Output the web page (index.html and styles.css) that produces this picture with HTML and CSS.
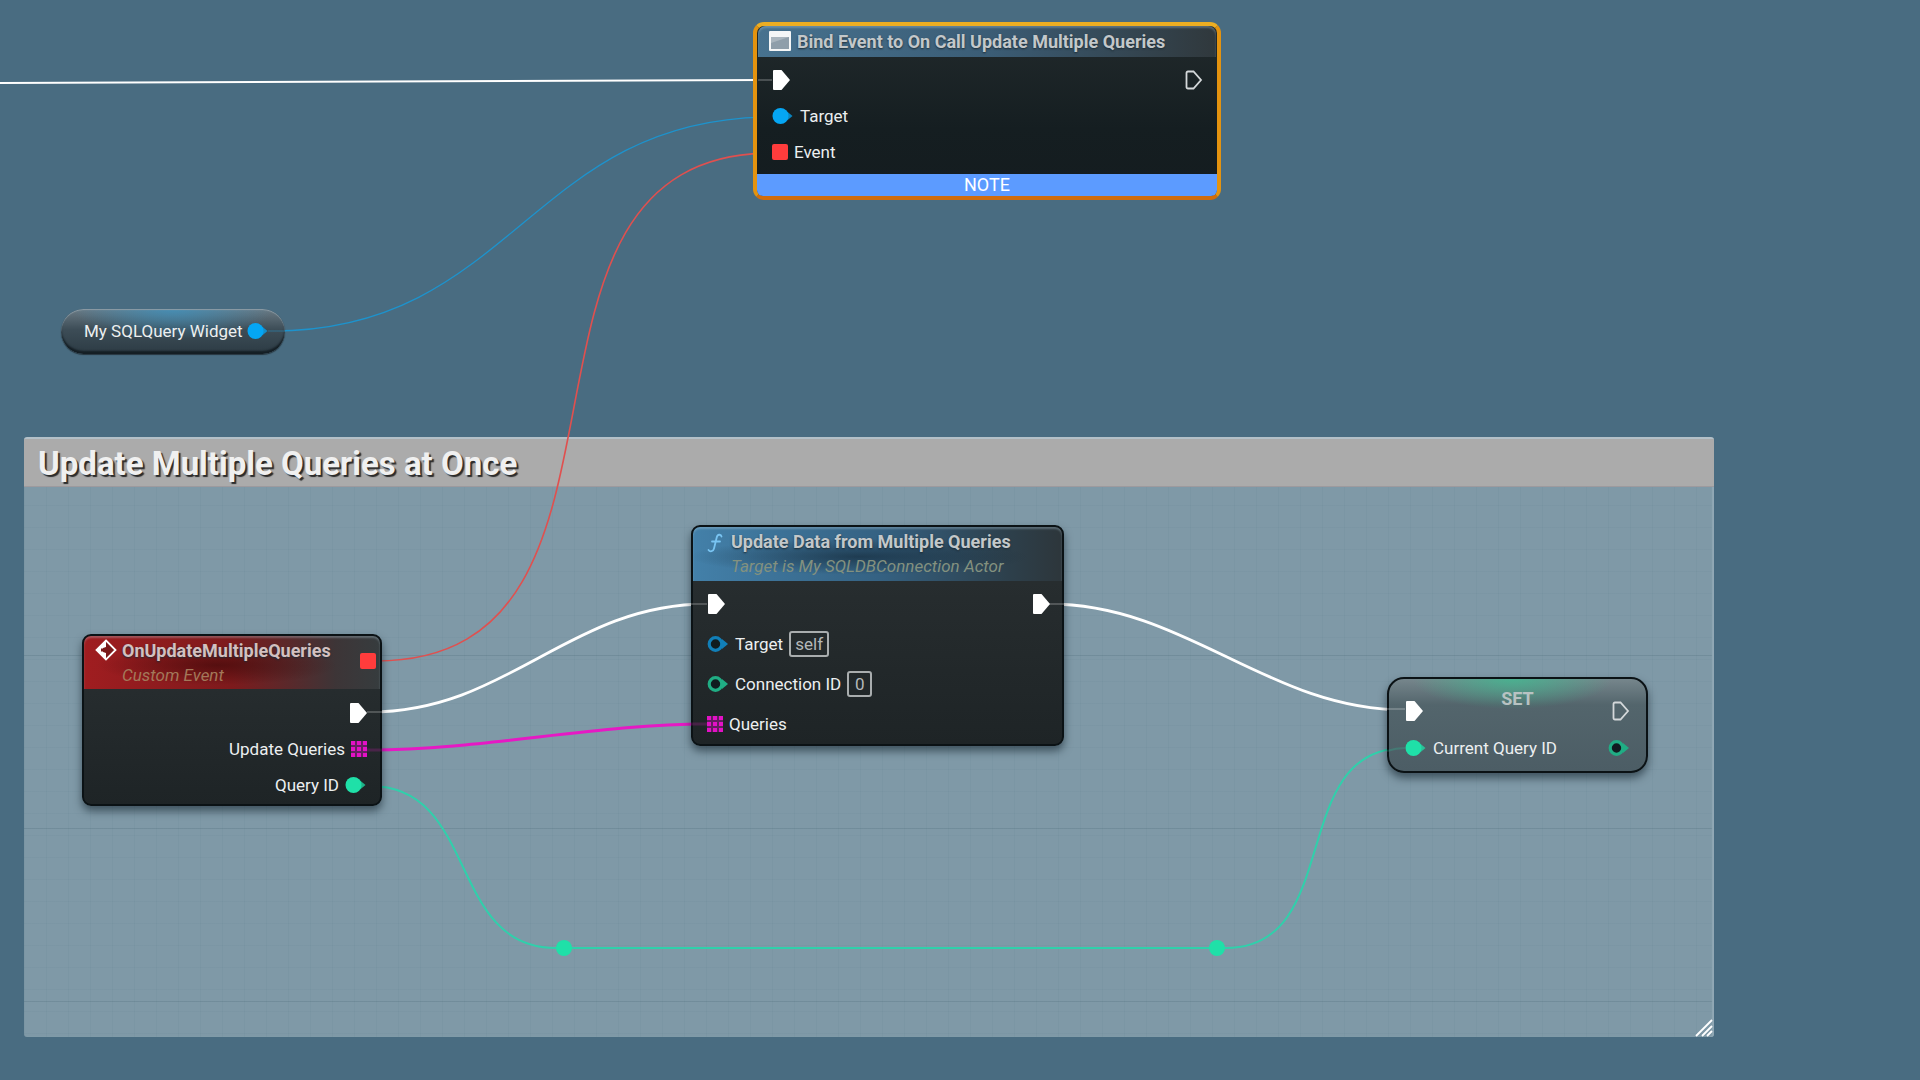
FILE: index.html
```html
<!DOCTYPE html>
<html lang="en">
<head>
<meta charset="utf-8">
<title>Blueprint Graph</title>
<link rel="stylesheet" href="styles.css">
</head>
<body>
<svg class="defs" aria-hidden="true">
  <symbol id="exec-on" viewBox="0 0 18 20"><path d="M2 0h7.500l8.500 10-8.500 10H2q-1 0-1-1V1q0-1 1-1z" fill="#fff"/></symbol>
  <symbol id="exec-off" viewBox="0 0 18 20"><path d="M3 1.500h5.500l7.500 8.500-7.500 8.500H3q-1.500 0-1.500-1.500V3q0-1.500 1.500-1.500z" fill="none" stroke="#d4d8da" stroke-width="1.800"/></symbol>
  <symbol id="pin-on" viewBox="0 0 22 18"><path d="M14.500 4l6 5-6 5z" fill="currentColor" opacity=".75"/><circle cx="8.500" cy="9" r="8" fill="currentColor"/></symbol>
  <symbol id="pin-off" viewBox="0 0 22 18"><path d="M15 4l6 5-6 5z" fill="currentColor"/><circle cx="8.500" cy="9" r="6.300" fill="#101c20" stroke="currentColor" stroke-width="3.200"/></symbol>
  <symbol id="pin-array" viewBox="0 0 16 16"><path d="M0 0h4v4H0zM6 0h4v4H6zM12 0h4v4h-4zM0 6h4v4H0zM6 6h4v4H6zM12 6h4v4h-4zM0 12h4v4H0zM6 12h4v4H6zM12 12h4v4h-4z" fill="currentColor"/><path d="M0 0h16v16H0z" fill="currentColor" opacity=".35"/></symbol>
  <symbol id="pin-delegate" viewBox="0 0 16 16"><rect width="16" height="16" rx="2" fill="currentColor"/></symbol>
</svg>
<main class="graph">
  <section class="comment">
    <h1 class="comment-title">Update Multiple Queries at Once</h1>
    <svg class="grip" viewBox="0 0 18 18"><path d="M1 17L17 1M7 17L17 7M12 17l5-5" stroke="#fff" stroke-width="1.800"/></svg>
  </section>

  <svg class="wires" fill="none">
    <path d="M0 83L772 80" stroke="#fff" stroke-width="2"/>
    <path d="M272 331C514 331 530 117 772 117" stroke="#1d93cd" stroke-width="1.300"/>
    <path d="M376 661C676 661 472 153 772 153" stroke="#e0504f" stroke-width="1.600"/>
    <path d="M370 712C508 712 569 604 707 604" stroke="#fff" stroke-width="2.800"/>
    <path d="M370 750C480 750 597 724 707 724" stroke="#e619c4" stroke-width="3"/>
    <path d="M1049 604C1186 604 1268 710 1405 710" stroke="#fff" stroke-width="2.800"/>
    <path d="M370 786C479 786 447 948 556 948H1226C1345 948 1286 748 1405 748" stroke="#30d0ab" stroke-width="2"/>
    <circle cx="564" cy="948" r="8" fill="#1fe0a8"/>
    <circle cx="1217" cy="948" r="8" fill="#1fe0a8"/>
  </svg>

  <article class="node bind">
    <header class="node-head">
      <svg class="window-icon" viewBox="0 0 22 20"><rect width="22" height="20" rx="1" fill="#f4f6f7"/><path d="M2 6h18v12H2z" fill="#8e9eaa"/><path d="M2 6h18L2 12z" fill="#a9b5be"/></svg>
      <h2 class="node-title">Bind Event to On Call Update Multiple Queries</h2>
    </header>
    <div class="pins">
      <div class="row"><svg class="exec"><use href="#exec-on"/></svg><svg class="exec end"><use href="#exec-off"/></svg></div>
      <div class="row"><svg class="pin blue"><use href="#pin-on"/></svg><span>Target</span></div>
      <div class="row"><svg class="sq red"><use href="#pin-delegate"/></svg><span>Event</span></div>
    </div>
    <footer class="note">NOTE</footer>
  </article>

  <article class="pill">
    <span>My SQLQuery Widget</span><svg class="pin blue"><use href="#pin-on"/></svg>
  </article>

  <article class="node event">
    <header class="node-head">
      <svg class="event-icon" viewBox="0 0 22 22"><path d="M11 1.500L20.500 11 11 20.500 1.500 11z" fill="#7a1a1b" stroke="#fff" stroke-width="1.800"/><path d="M11 1.500V8L8 9v4l3 1v6.500L1.500 11z" fill="#fff"/><path d="M11 6.500L15.500 11 11 15.500v-3H6v-3h5z" fill="#7a1a1b"/></svg>
      <div class="titles"><h2 class="node-title">OnUpdateMultipleQueries</h2><p class="subtitle">Custom Event</p></div>
      <svg class="sq red end"><use href="#pin-delegate"/></svg>
    </header>
    <div class="pins">
      <div class="row"><svg class="exec end"><use href="#exec-on"/></svg></div>
      <div class="row out"><span>Update Queries</span><svg class="sq pink"><use href="#pin-array"/></svg></div>
      <div class="row out"><span>Query ID</span><svg class="pin green"><use href="#pin-on"/></svg></div>
    </div>
  </article>

  <article class="node func">
    <header class="node-head">
      <svg class="f-icon" viewBox="0 0 16 20"><path d="M14.500 3.500C14 1 10.500 1 9.700 4.500L7 15.500C6.300 18.600 3 19.200 1.500 17M5 8.500h8" fill="none" stroke="#79c4f2" stroke-width="1.800" stroke-linecap="round"/></svg>
      <div class="titles"><h2 class="node-title">Update Data from Multiple Queries</h2><p class="subtitle">Target is My SQLDBConnection Actor</p></div>
    </header>
    <div class="pins">
      <div class="row"><svg class="exec"><use href="#exec-on"/></svg><svg class="exec end"><use href="#exec-on"/></svg></div>
      <div class="row"><svg class="pin blue-dim"><use href="#pin-off"/></svg><label for="target">Target</label><input class="field wide" id="target" value="self"></div>
      <div class="row"><svg class="pin green-dim"><use href="#pin-off"/></svg><label for="conn">Connection ID</label><input class="field" id="conn" value="0"></div>
      <div class="row"><svg class="sq pink"><use href="#pin-array"/></svg><span>Queries</span></div>
    </div>
  </article>

  <article class="node set">
    <div class="row"><svg class="exec"><use href="#exec-on"/></svg><h2 class="set-title">SET</h2><svg class="exec"><use href="#exec-off"/></svg></div>
    <div class="row"><svg class="pin green"><use href="#pin-on"/></svg><span>Current Query ID</span><svg class="pin green-dim end"><use href="#pin-off"/></svg></div>
  </article>

  <svg class="wires stubs" fill="none">
    <path d="M758 80H772M691 604H707M1049 604H1064M367 712H382M1387 709H1405" stroke="#fff" stroke-width="2"/>
    <path d="M268 331H286" stroke="#1fa8e8" stroke-width="2"/>
    <path d="M367 750H382M691 724H707" stroke="#e619c4" stroke-width="3"/>
    <path d="M1387 751Q1396 748 1405 748" stroke="#1fe0a8" stroke-width="2"/>
  </svg>
</main>
</body>
</html>
```
FILE: styles.css
```css
* { box-sizing: border-box; }
body {
  margin: 0;
  background: #496c81;
  color: #eceff0;
  font: 17px/20px Roboto, "Liberation Sans", sans-serif;
}
h1, h2, p { margin: 0; }
svg { display: block; flex: none; }
.defs { position: absolute; width: 0; height: 0; }
.graph { position: relative; min-height: 100vh; overflow: hidden; }

.comment {
  position: absolute; left: 24px; top: 437px; width: 1690px; height: 600px;
  border-radius: 3px;
  border-top: 2px solid #b3c0c8;
  background-color: #7f99a7;
  background-image:
    linear-gradient(rgba(80, 110, 125, .3) 1px, transparent 1px),
    linear-gradient(rgba(80, 115, 130, .08) 1px, transparent 1px),
    linear-gradient(90deg, rgba(80, 115, 130, .08) 1px, transparent 1px);
  background-size: 100% 173px, 100% 22px, 22px 100%;
  background-position: 0 43px, 0 0, 0 0;
  box-shadow: inset -2px 0 1px #91a8b5;
}
.comment-title {
  height: 48px; padding: 0 14px;
  background: #ababab;
  border-bottom: 1px solid #9d9a9e;
  color: #f0f0f0;
  font-size: 33px; line-height: 50px; font-weight: 700;
  text-shadow: 2px 2px 1px #2b2b2b;
}
.grip { position: absolute; right: 1px; bottom: 0; width: 18px; height: 18px; }

.wires { position: absolute; inset: 0; width: 100%; height: 100%; pointer-events: none; }
.stubs { opacity: .2; }

.node {
  position: absolute;
  border: 2px solid #0b1215;
  border-radius: 9px;
  background: linear-gradient(#2a3032, #1e2426);
  box-shadow: 0 5px 8px rgba(20, 35, 45, .6);
}
.node-head {
  display: flex; align-items: flex-start; gap: 8px;
  border-radius: 7px 7px 0 0;
  box-shadow: inset 0 2px 2px rgba(190, 215, 230, .3);
}
.node-title { color: #c3c8ca; font-size: 18px; line-height: 24px; font-weight: 700; white-space: nowrap; text-shadow: 0 1px 2px #1c2b34; }
.subtitle { font-style: italic; line-height: 24px; white-space: nowrap; }
.pins { display: flex; flex-direction: column; }
.row { display: flex; align-items: center; gap: 6px; white-space: nowrap; }
.end { margin-left: auto; }
.out { justify-content: flex-end; }
.exec { width: 18px; height: 20px; }
.pin { width: 22px; height: 18px; }
.sq { width: 16px; height: 16px; }
.blue { color: #05a6f4; }
.blue-dim { color: #117fb8; }
.green { color: #1fe0a8; }
.green-dim { color: #20ad84; }
.red { color: #ff3c3c; }
.pink { color: #e312c5; }
.field {
  width: 25px; height: 26px; padding: 0;
  border: 2px solid #a9adae; border-radius: 3px;
  background: transparent; color: #b4b8b9;
  font: inherit; text-align: center;
}
.field.wide { width: 40px; }

.bind {
  left: 753px; top: 22px; width: 468px;
  border: 4px solid #e8a013; border-color: #edae22 #e4930f #d06c0c;
  border-radius: 11px;
  background: linear-gradient(#222a2c, #151e21 60%, #141c1f);
  box-shadow: none;
}
.bind .node-head {
  height: 31px; padding: 5px 11px 0; gap: 6px; margin: 0 1px;
  border-radius: 8px 8px 0 0;
  background: linear-gradient(90deg, #47728f, #3b5d76 50%, #30383c);
}
.window-icon { width: 22px; height: 20px; }
.bind .node-title { line-height: 21px; }
.bind .pins { padding: 5px 14px 4px 15px; }
.bind .row { height: 36px; }
.note {
  height: 22px; border-radius: 0 0 6px 6px;
  background: #5c9bff; color: #fff; line-height: 22px; font-size: 18px; text-align: center;
}

.pill {
  position: absolute; left: 61px; top: 309px; width: 224px; height: 45px;
  display: flex; align-items: center; gap: 4px; padding: 0 0 2px 23px;
  border-radius: 23px;
  background:
    radial-gradient(ellipse 100px 30px at 50% 0, rgba(55, 150, 200, .7), transparent),
    linear-gradient(#6b7b85, #3d4d57 45%, #2c3b44);
  box-shadow: inset 0 1px 1px #8d9ca5, inset 0 -3px 2px #141e24, 0 1px 1px #26353e;
}

.event { left: 82px; top: 634px; width: 300px; }
.event .node-head {
  height: 53px; padding: 3px 4px 0 11px; gap: 5px;
  background:
    radial-gradient(ellipse 120px 20px at 45% 55%, rgba(50, 5, 5, .55), transparent),
    linear-gradient(90deg, #a01d20, #7d1a1c 50%, #3d3537 85%, #363c3e);
}
.event-icon { width: 22px; height: 22px; }
.event .subtitle { color: #a3785a; }
.event .sq.red { margin-top: 14px; }
.event .pins { padding: 5px 13px 1px 0; }
.event .row { height: 37px; }
.event .out { height: 36px; }
.event .node-title { color: #d3c0c0; }

.func { left: 691px; top: 525px; width: 373px; }
.func .node-head {
  height: 54px; padding: 3px 14px 0; gap: 8px;
  background:
    radial-gradient(ellipse 170px 18px at 45% 55%, rgba(15, 32, 45, .6), transparent),
    linear-gradient(90deg, #4380a9, #356283 50%, #2d404c 85%, #2d363b);
}
.f-icon { width: 16px; height: 20px; margin: 3px 0 0; }
.func .subtitle { color: #83917f; }
.func .pins { padding: 3px 12px 0 14px; }
.func .row { height: 40px; }

.set {
  left: 1387px; top: 677px; width: 261px; padding: 13px 16px 5px;
  border-radius: 17px;
  background:
    radial-gradient(ellipse 100px 30px at 48% 0, rgba(60, 190, 145, .75), transparent),
    linear-gradient(#76868c, #53656c 28%, #4c5d65);
}
.set .row { height: 37px; }
.set-title { flex: 1; text-align: center; color: #b8c2c2; font-size: 18px; line-height: 20px; padding-bottom: 24px; }
```
